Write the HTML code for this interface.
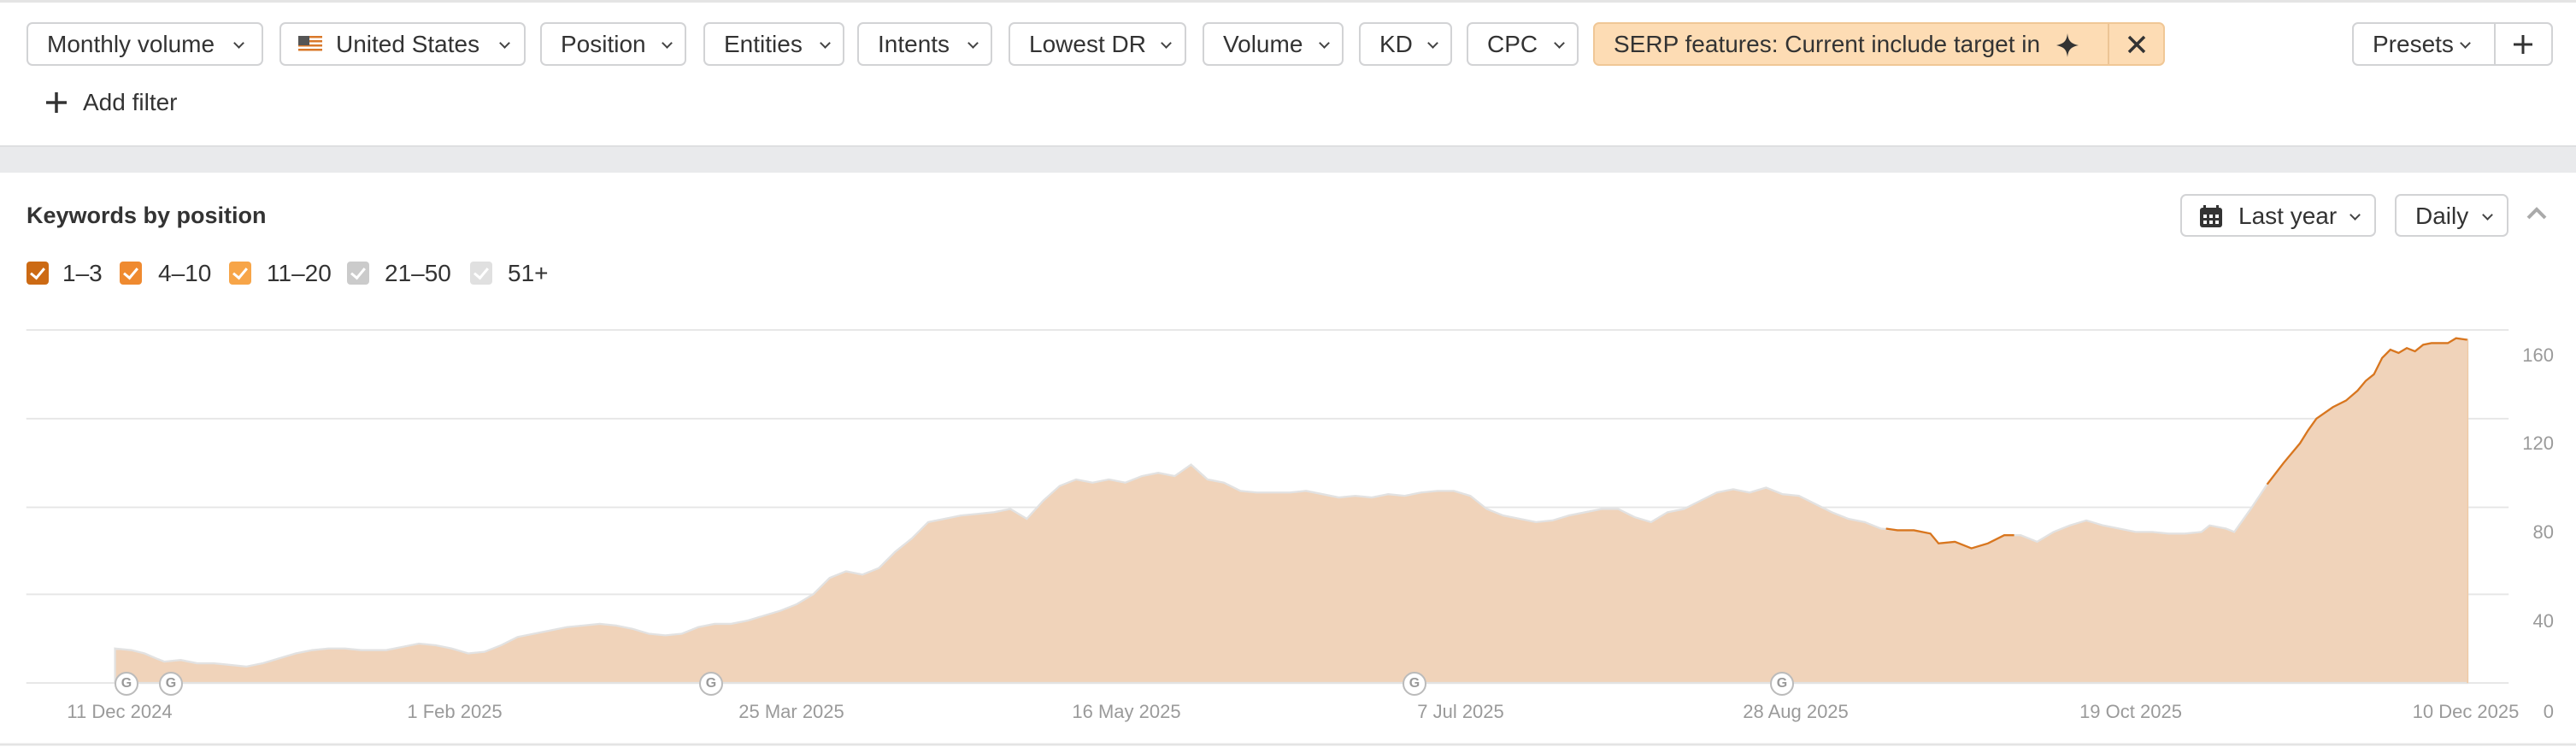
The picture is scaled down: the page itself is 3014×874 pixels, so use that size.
<!DOCTYPE html>
<html><head><meta charset="utf-8"><style>
*{box-sizing:border-box;margin:0;padding:0}
body{width:3014px;height:874px;background:#fff;font-family:"Liberation Sans",Arial,sans-serif;color:#333;position:relative;overflow:hidden}
.top{position:absolute;left:0;top:0;width:3014px;height:3px;background:#e4e4e4}
.btn{position:absolute;top:26px;height:51px;border:2px solid #d2d3d5;border-radius:7px;background:#fff;font-size:28px;line-height:47px;color:#333;white-space:nowrap;padding-left:22px}
.chev{position:absolute;top:0;width:14px;height:47px}
.chev:after{content:"";position:absolute;left:2px;top:18px;width:7px;height:7px;border-right:2px solid #444;border-bottom:2px solid #444;transform:rotate(45deg)}
.band{position:absolute;left:0;top:170px;width:3014px;height:32px;background:#e9eaec;border-top:2px solid #dedfe1}
.lbl{position:absolute;font-size:28px;line-height:30px}
.cb{position:absolute;top:306px;width:26px;height:27px;border-radius:4px}
.cb:after{content:"";position:absolute;left:8px;top:4px;width:7px;height:13px;border-right:3px solid #fff;border-bottom:3px solid #fff;transform:rotate(40deg)}
.ax{position:absolute;font-size:22px;color:#9a9a9a;line-height:24px}
.g{position:absolute;top:786px;width:28px;height:28px;border:2px solid #bbb;border-radius:50%;background:#fff;font-size:16px;font-weight:bold;color:#999;text-align:center;line-height:24px}
</style></head><body>
<div class="top"></div>

<div class="btn" style="left:31px;width:277px">Monthly volume<span class="chev" style="left:240px"></span></div>
<div class="btn" style="left:327px;width:288px;padding-left:64px">
<svg style="position:absolute;left:20px;top:14px" width="28" height="20" viewBox="0 0 28 20"><rect width="28" height="20" fill="#fff"/><g fill="#d9782a"><rect y="0" width="28" height="2.5"/><rect y="5" width="28" height="2.5"/><rect y="10" width="28" height="2.5"/><rect y="15" width="28" height="2.5"/></g><rect width="13" height="11" fill="#555"/></svg>United States<span class="chev" style="left:255px"></span></div>
<div class="btn" style="left:632px;width:171px">Position<span class="chev" style="left:140px"></span></div>
<div class="btn" style="left:823px;width:165px">Entities<span class="chev" style="left:134px"></span></div>
<div class="btn" style="left:1003px;width:158px">Intents<span class="chev" style="left:127px"></span></div>
<div class="btn" style="left:1180px;width:208px">Lowest DR<span class="chev" style="left:176px"></span></div>
<div class="btn" style="left:1407px;width:165px">Volume<span class="chev" style="left:134px"></span></div>
<div class="btn" style="left:1590px;width:109px">KD<span class="chev" style="left:78px"></span></div>
<div class="btn" style="left:1716px;width:131px">CPC<span class="chev" style="left:100px"></span></div>
<div class="btn" style="left:1864px;width:669px;background:#fddcb4;border-color:#f0c796">SERP features: Current include target in
<svg style="position:absolute;left:538px;top:10px" width="30" height="30" viewBox="0 0 30 30"><path d="M15 1 C16 10 19 13 28 15 C19 17 16 20 15 29 C14 20 11 17 2 15 C11 13 14 10 15 1Z" fill="#333"/></svg>
<span style="position:absolute;left:600px;top:0;width:2px;height:47px;background:#ecc495"></span>
<svg style="position:absolute;left:622px;top:12px" width="24" height="24" viewBox="0 0 24 24"><path d="M3 3L21 21M21 3L3 21" stroke="#333" stroke-width="3.5"/></svg></div>
<div class="btn" style="left:2752px;width:235px">Presets<span class="chev" style="left:124px"></span>
<span style="position:absolute;left:164px;top:0;width:2px;height:47px;background:#d2d3d5"></span>
<svg style="position:absolute;left:186px;top:12px" width="24" height="24" viewBox="0 0 24 24"><path d="M12 1V23M1 12H23" stroke="#333" stroke-width="3"/></svg></div>

<svg style="position:absolute;left:54px;top:108px" width="24" height="24" viewBox="0 0 24 24"><path d="M12 0V24M0 12H24" stroke="#333" stroke-width="3.5"/></svg>
<div class="lbl" style="left:97px;top:105px">Add filter</div>

<div class="band"></div>

<div class="lbl" style="left:31px;top:237px;font-weight:bold;font-size:27px">Keywords by position</div>

<div class="btn" style="left:2551px;top:227px;width:229px;height:50px;padding-left:66px">
<svg style="position:absolute;left:20px;top:10px" width="28" height="28" viewBox="0 0 28 28"><rect x="1" y="4" width="26" height="23" rx="3" fill="#333"/><rect x="5" y="1" width="3" height="6" fill="#333"/><rect x="20" y="1" width="3" height="6" fill="#333"/><g fill="#fff"><rect x="5" y="12" width="4" height="4"/><rect x="12" y="12" width="4" height="4"/><rect x="19" y="12" width="4" height="4"/><rect x="5" y="19" width="4" height="4"/><rect x="12" y="19" width="4" height="4"/><rect x="19" y="19" width="4" height="4"/></g></svg>Last year<span class="chev" style="left:196px"></span></div>
<div class="btn" style="left:2802px;top:227px;width:133px;height:50px">Daily<span class="chev" style="left:100px"></span></div>
<svg style="position:absolute;left:2955px;top:240px" width="26" height="18" viewBox="0 0 26 18"><path d="M3 15L13 5L23 15" stroke="#aaa" stroke-width="4" fill="none"/></svg>

<div class="cb" style="left:31px;background:#cc6a14"></div><div class="lbl" style="left:73px;top:305px">1–3</div>
<div class="cb" style="left:140px;background:#ef8a30"></div><div class="lbl" style="left:185px;top:305px">4–10</div>
<div class="cb" style="left:268px;background:#f7a548"></div><div class="lbl" style="left:312px;top:305px">11–20</div>
<div class="cb" style="left:406px;background:#cbcbcb"></div><div class="lbl" style="left:450px;top:305px">21–50</div>
<div class="cb" style="left:550px;background:#e0e0e0"></div><div class="lbl" style="left:594px;top:305px">51+</div>

<svg style="position:absolute;left:0;top:0" width="3014" height="874" viewBox="0 0 1568 455" preserveAspectRatio="none">
<g stroke="#e6e6e6" stroke-width="1"><line x1="16" y1="201" x2="1527" y2="201"/><line x1="16" y1="255" x2="1527" y2="255"/><line x1="16" y1="309" x2="1527" y2="309"/><line x1="16" y1="362" x2="1527" y2="362"/><line x1="16" y1="416" x2="1527" y2="416"/></g>
<path id="a" d="M70 395L80 396L88 398L95 401L100 403L110 402L120 404L130 404L140 405L150 406L160 404L170 401L180 398L190 396L200 395L210 395L220 396L235 396L245 394L255 392L265 393L275 395L285 398L295 397L305 393L315 388L325 386L335 384L345 382L355 381L365 380L375 381L385 383L395 386L405 387L415 386L425 382L435 380L445 380L455 378L465 375L475 372L485 368L495 362L505 352L515 348L525 350L535 346L545 336L555 328L565 318L575 316L585 314L595 313L605 312L615 310L625 316L635 305L645 296L655 292L665 294L675 292L685 294L695 290L705 288L715 290L725 283L735 292L745 294L755 299L765 300L775 300L785 300L795 299L805 301L815 303L825 302L835 303L845 301L855 302L865 300L875 299L885 299L895 302L905 310L915 314L925 316L935 318L945 317L955 314L965 312L975 310L985 310L995 315L1005 318L1015 312L1025 310L1035 305L1045 300L1055 298L1065 300L1075 297L1085 301L1095 302L1105 307L1115 312L1125 316L1135 318L1145 322L1155 323L1165 323L1175 325L1180 331L1190 330L1200 334L1210 331L1220 326L1230 326L1240 330L1250 324L1260 320L1270 317L1280 320L1290 322L1300 324L1310 324L1320 325L1330 325L1340 324L1345 320L1355 322L1360 324L1370 310L1380 295L1390 282L1400 270L1405 262L1410 255L1420 248L1428 244L1435 238L1440 232L1445 228L1450 218L1455 213L1460 215L1465 212L1470 214L1475 210L1480 209L1490 209L1495 206L1502 207L1502 416L70 416Z" fill="#f0d3ba" stroke="#e2e2e2" stroke-width="1.2"/>
<path d="M1148 322L1155 323L1165 323L1175 325L1180 331L1190 330L1200 334L1210 331L1220 326L1226 326" fill="none" stroke="#d9761e" stroke-width="1.2"/>
<path d="M1380 295L1390 282L1400 270L1405 262L1410 255L1420 248L1428 244L1435 238L1440 232L1445 228L1450 218L1455 213L1460 215L1465 212L1470 214L1475 210L1480 209L1490 209L1495 206L1502 207" fill="none" stroke="#d9761e" stroke-width="1.2"/>
<line x1="1502" y1="207" x2="1502" y2="416" stroke="#f3c79c" stroke-width="0.8"/>
<line x1="0" y1="453.5" x2="1568" y2="453.5" stroke="#e4e4e4" stroke-width="1.5"/>
</svg>

<div class="g" style="left:134px">G</div><div class="g" style="left:186px">G</div><div class="g" style="left:818px">G</div><div class="g" style="left:1641px">G</div><div class="g" style="left:2071px">G</div>

<div class="ax" style="left:2940px;top:404px;width:48px;text-align:right">160</div>
<div class="ax" style="left:2940px;top:507px;width:48px;text-align:right">120</div>
<div class="ax" style="left:2940px;top:611px;width:48px;text-align:right">80</div>
<div class="ax" style="left:2940px;top:715px;width:48px;text-align:right">40</div>
<div class="ax" style="left:2940px;top:821px;width:48px;text-align:right">0</div>

<div class="ax" style="left:40px;top:821px;width:200px;text-align:center">11 Dec 2024</div>
<div class="ax" style="left:432px;top:821px;width:200px;text-align:center">1 Feb 2025</div>
<div class="ax" style="left:826px;top:821px;width:200px;text-align:center">25 Mar 2025</div>
<div class="ax" style="left:1218px;top:821px;width:200px;text-align:center">16 May 2025</div>
<div class="ax" style="left:1609px;top:821px;width:200px;text-align:center">7 Jul 2025</div>
<div class="ax" style="left:2001px;top:821px;width:200px;text-align:center">28 Aug 2025</div>
<div class="ax" style="left:2393px;top:821px;width:200px;text-align:center">19 Oct 2025</div>
<div class="ax" style="left:2785px;top:821px;width:200px;text-align:center">10 Dec 2025</div>
</body></html>
